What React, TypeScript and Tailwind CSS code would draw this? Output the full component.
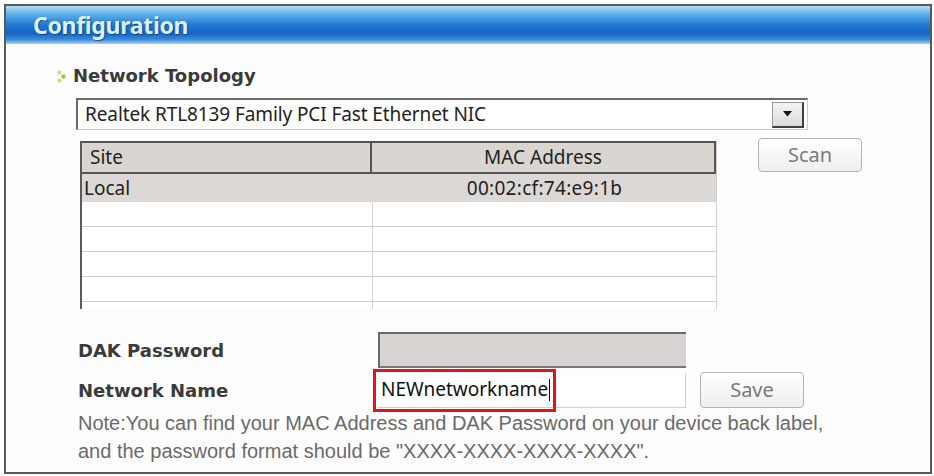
import React from "react";

const tahoma = { fontFamily: '"Noto Sans", "DejaVu Sans", sans-serif' };
const verdana = { fontFamily: '"DejaVu Sans", Verdana, sans-serif' };

function Arrow() {
  return (
    <svg width="10" height="13" viewBox="0 0 10 13" className="mr-[6px]">
      <circle cx="2.5" cy="2.5" r="2" fill="#c4e060" />
      <circle cx="6.5" cy="6.5" r="2.2" fill="#a0cc3c" />
      <circle cx="2.5" cy="10.5" r="2" fill="#c4e060" />
    </svg>
  );
}

export default function App() {
  const emptyRows = [25, 25, 25, 25];
  return (
    <div className="w-[934px] h-[476px] bg-white pt-[4px] pl-[4px] overflow-hidden">
      <div className="w-[928px] h-[470px] border-2 border-[#5a5a5a] bg-[#fdfdfd] flex flex-col">
        {/* Title bar */}
        <div className="h-[38px] shrink-0 flex items-center pl-[27px] bg-[linear-gradient(to_bottom,#b4def6_0%,#5fb0ea_22%,#1f78d2_50%,#1565c4_72%,#3b8ad8_88%,#a9d2f2_100%)]">
          <span
            className="text-[23px] font-bold text-[#d9f1ff] leading-none tracking-[-0.3px] [text-shadow:1px_1px_1px_rgba(0,40,100,0.6)]"
            style={tahoma}
          >
            Configuration
          </span>
        </div>

        <div className="flex flex-col pl-[70px]">
          {/* Network Topology */}
          <div className="flex items-center mt-[22px] ml-[-19px] h-[20px]">
            <Arrow />
            <span className="text-[18px] font-bold text-[#3a3a3a] leading-none" style={verdana}>
              Network Topology
            </span>
          </div>

          {/* Dropdown */}
          <div className="mt-[12px] w-[732px] h-[32px] border-t-2 border-l-2 border-[#6a6a6a] border-b border-r border-b-[#c9c9c9] border-r-[#c9c9c9] bg-white flex items-center justify-between pr-[3px]">
            <span className="pl-[7px] text-[19px] text-[#222] tracking-[-0.1px]" style={tahoma}>
              Realtek RTL8139 Family PCI Fast Ethernet NIC
            </span>
            <div className="w-[32px] h-[26px] bg-[linear-gradient(to_bottom,#f4f4f2,#dcdad6)] border border-[#9a9a9a] border-r-2 border-b-2 border-r-[#404040] border-b-[#404040] flex items-center justify-center">
              <svg width="9" height="6" viewBox="0 0 9 6">
                <path d="M0 0 L9 0 L4.5 5.5 Z" fill="#111" />
              </svg>
            </div>
          </div>

          {/* Table + Scan */}
          <div className="flex mt-[11px]">
            <div className="ml-[4px] w-[637px] h-[168px] border-l-2 border-[#5a5a5a] border-r border-r-[#cfcfcf] bg-white flex flex-col overflow-hidden">
              <div className="flex h-[33px] bg-[#d9d6d2] border-t-2 border-b-2 border-[#555] text-[19px] text-[#222]" style={tahoma}>
                <div className="w-[290px] border-r-2 border-[#555] flex items-center pl-[8px]">Site</div>
                <div className="flex-1 flex items-center justify-center border-r-2 border-[#555]">MAC Address</div>
              </div>
              <div className="flex h-[28px] bg-[#dbd8d5] text-[19px] text-[#222]" style={tahoma}>
                <div className="w-[291px] flex items-center pl-[2px]">Local</div>
                <div className="flex-1 flex items-center justify-center tracking-[0.3px]">00:02:cf:74:e9:1b</div>
              </div>
              {emptyRows.map((h, i) => (
                <div key={i} className="flex h-[25px] border-b border-[#cdcdcd]">
                  <div className="w-[291px] border-r border-[#d4d4d4]" />
                  <div className="flex-1" />
                </div>
              ))}
              <div className="flex flex-1">
                <div className="w-[291px] border-r border-[#d4d4d4]" />
                <div className="flex-1" />
              </div>
            </div>
            <div className="ml-[41px] mt-[-3px]">
              <div
                className="w-[104px] h-[34px] rounded-[4px] border border-[#b4b4b4] bg-[linear-gradient(to_bottom,#ffffff,#eeeeee)] flex items-center justify-center text-[20px] text-[#7a7a7a]"
                style={tahoma}
              >
                Scan
              </div>
            </div>
          </div>

          {/* DAK password */}
          <div className="flex items-center mt-[23px]">
            <span className="w-[300px] ml-[2px] text-[18px] font-bold text-[#3a3a3a]" style={verdana}>
              DAK Password
            </span>
            <div className="w-[308px] h-[36px] bg-[#d6d3d0] border-t-2 border-l-2 border-[#6a6a6a] border-b-2 border-b-[#777]" />
          </div>

          {/* Network name */}
          <div className="flex items-center mt-[4px]">
            <span className="w-[300px] ml-[2px] text-[18px] font-bold text-[#3a3a3a]" style={verdana}>
              Network Name
            </span>
            <div className="relative w-[308px] h-[35px] bg-white border-r border-b border-[#d0d0d0] flex items-center">
              <span className="pl-[3px] text-[19px] text-[#111] tracking-[0px]" style={tahoma}>
                NEWnetworkname
              </span>
              <span className="w-px h-[22px] bg-[#111] ml-[1px]" />
              <div className="absolute left-[-5px] top-[-4px] w-[183px] h-[43px] border-[3px] border-[#e0141e]" />
            </div>
            <div
              className="ml-[14px] w-[104px] h-[36px] rounded-[4px] border border-[#b4b4b4] bg-[linear-gradient(to_bottom,#ffffff,#eeeeee)] flex items-center justify-center text-[20px] text-[#7a7a7a]"
              style={tahoma}
            >
              Save
            </div>
          </div>

          {/* Note */}
          <div
            className="mt-[1px] ml-[2px] text-[20px] leading-[28px] text-[#6a6a6a]"
            style={{ fontFamily: '"Liberation Sans", Arial, sans-serif' }}
          >
            <div>Note:You can find your MAC Address and DAK Password on your device back label,</div>
            <div>and the password format should be "XXXX-XXXX-XXXX-XXXX".</div>
          </div>
        </div>
      </div>
    </div>
  );
}
